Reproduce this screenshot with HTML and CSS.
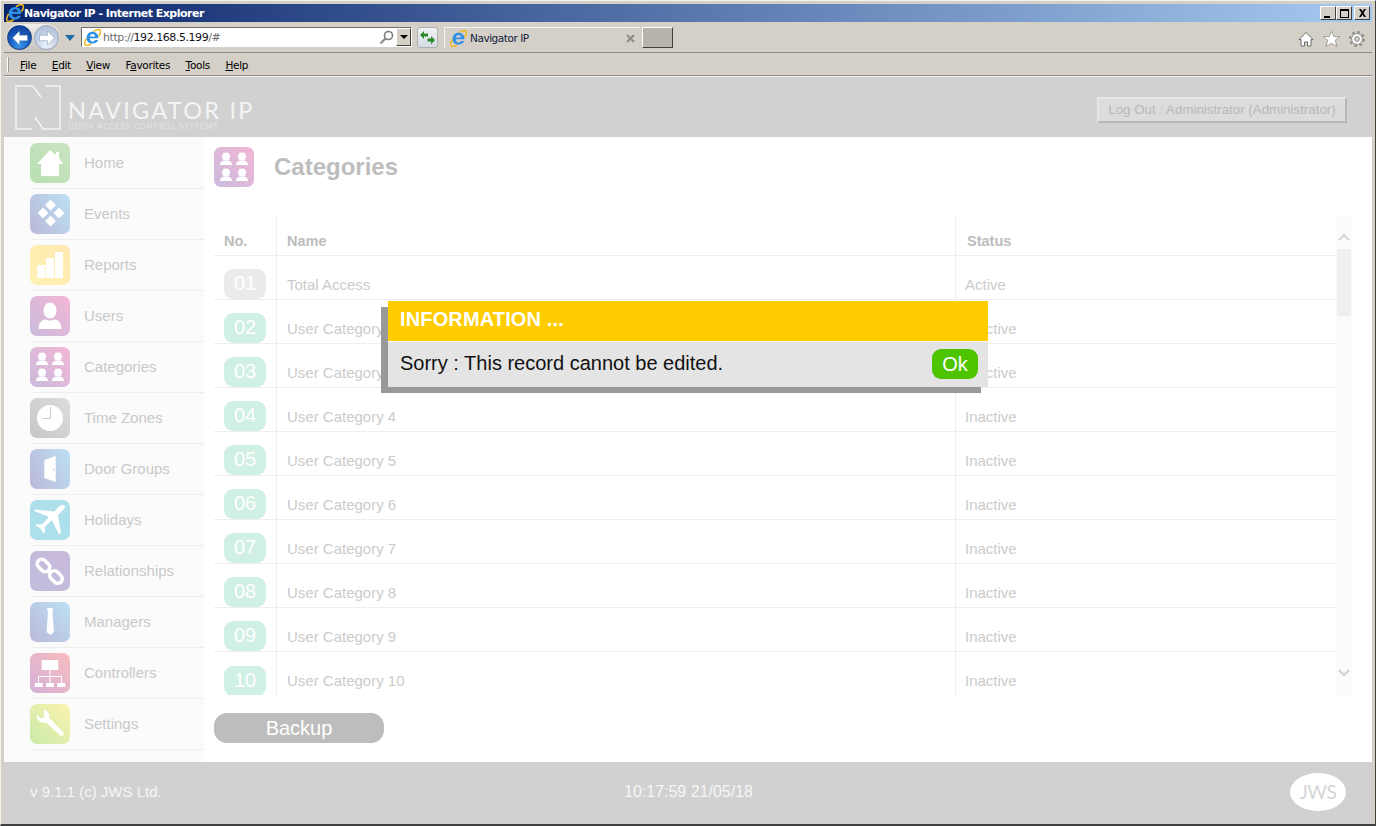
FILE: index.html
```html
<!DOCTYPE html>
<html lang="en">
<head>
<meta charset="utf-8">
<title>Navigator IP - Internet Explorer</title>
<link rel="stylesheet" href="styles.css">
</head>
<body>
<svg class="defs" width="0" height="0" aria-hidden="true">
  <defs>
    <symbol id="ie" viewBox="0 0 20 20">
      <path d="M11 3C14 1 18 0 19 1.500 20 3 18.500 6.500 17 8.500M2.800 11C1 14.500 0 17.500 1.500 18.800 3 20 6 19 8.500 17.500" fill="none" stroke="#f2b51c" stroke-width="1.700"/>
      <path d="M4.500 11H16.800C17.300 6 13.800 3.300 10 3.300 6 3.300 3 6.500 3 10.500 3 14.500 6 17.200 10 17.200 13.200 17.200 15.700 15.600 16.700 13H13C12.200 14.200 11.300 14.800 10 14.800 8 14.800 6.800 13 6.800 11ZM6.900 8.700C7.200 7 8.300 5.800 10 5.800 11.700 5.800 12.900 7 13.100 8.700Z" fill="#2e90e6" fill-rule="evenodd"/>
    </symbol>
    <symbol id="i-home" viewBox="0 0 40 40"><path d="M7 21 20 7l6 5V9h3v6l4 6h-4v12H11V21z" fill="#fff"/></symbol>
    <symbol id="i-events" viewBox="0 0 40 40"><path d="M20.500 5.500 26 11l-5.500 5.500L15 11zM13 13.500 18.500 19 13 24.500 7.500 19zM29 13.500 34.500 19 29 24.500 23.500 19zM20.500 21.500 26 27l-5.500 5.500L15 27z" fill="#fff"/></symbol>
    <symbol id="i-reports" viewBox="0 0 40 40"><path d="M7.300 20h8v13h-8zM16 13h8v20h-8zM25 7h8v26h-8z" fill="#fff"/></symbol>
    <symbol id="i-user" viewBox="0 0 40 40"><ellipse cx="20" cy="14.500" rx="6.500" ry="8" fill="#fff"/><path d="M8.500 33c0-6.500 3.500-9.500 7.500-9.500 2.500 1.500 5.500 1.500 8 0 4 0 7.500 3 7.500 9.500z" fill="#fff"/></symbol>
    <symbol id="i-cats" viewBox="0 0 40 40">
      <g fill="#fff">
        <circle cx="12" cy="9.500" r="4"/><path d="M6 18c0-3 2.500-4.500 4.500-4.500h3c2 0 4.500 1.500 4.500 4.500z"/>
        <circle cx="28" cy="9.500" r="4"/><path d="M22 18c0-3 2.500-4.500 4.500-4.500h3c2 0 4.500 1.500 4.500 4.500z"/>
        <circle cx="12" cy="25.500" r="4"/><path d="M6 34c0-3 2.500-4.500 4.500-4.500h3c2 0 4.500 1.500 4.500 4.500z"/>
        <circle cx="28" cy="25.500" r="4"/><path d="M22 34c0-3 2.500-4.500 4.500-4.500h3c2 0 4.500 1.500 4.500 4.500z"/>
      </g>
    </symbol>
    <symbol id="i-clock" viewBox="0 0 40 40"><circle cx="20" cy="20" r="13" fill="#fff"/><path d="M20.500 9v11.500H13" fill="none" stroke="#c8c8c8"/></symbol>
    <symbol id="i-door" viewBox="0 0 40 40"><path d="M14.300 11 25.700 7v26l-11.400-4z" fill="#fff"/><rect x="23" y="19.500" width="1" height="2" fill="#c4c9e2"/></symbol>
    <symbol id="i-plane" viewBox="0 0 40 40"><path d="M34.500 5.500C33 4 30 5.500 28 7.500L24 11.500 5 9.500 4 11l15 6-7 7.500-5-.5-1.500 1.500 5 3 3 5 1.500-1.500-.3-5L22 20l7 14.500 2-1.500-3-18 4.500-4.500c2-2 3.500-3.500 2-5z" fill="#fff"/></symbol>
    <symbol id="i-chain" viewBox="0 0 40 40"><g fill="none" stroke="#fff" stroke-width="3.600"><rect x="6.500" y="10" width="14" height="9" rx="4.500" transform="rotate(45 13.500 14.500)"/><rect x="19" y="21.500" width="14" height="9" rx="4.500" transform="rotate(45 26 26)"/></g></symbol>
    <symbol id="i-tie" viewBox="0 0 40 40"><path d="M17 6h6l-.5 5 1.500 19-3.500 3-4-3 1.500-19z" fill="#fff"/></symbol>
    <symbol id="i-net" viewBox="0 0 40 40"><path d="M11.700 7h16.600v10H11.700zM4.700 30h8v4h-8zM16 30h8v4h-8zM27.300 30h8v4h-8z" fill="#fff"/><path d="M20 17v13M8.500 30v-6.500h23V30" fill="none" stroke="#fff"/></symbol>
    <symbol id="i-wrench" viewBox="0 0 40 40"><path d="M6.500 10.500 10.500 14.500 14.500 13 13.500 6C17.500 6 20 9.500 19 13.500L33.500 28.500C34.500 30 33 32.500 30.500 31.500L16 18.500C11 20 6 16 6.500 10.500Z" fill="#fff"/></symbol>
    <symbol id="i-arrow" viewBox="0 0 24 24"><path d="M3 12l8.500-8.500v5.300H21v6.400h-9.500v5.300z" fill="#fff" stroke="#5a7fa8" stroke-width=".5" stroke-linejoin="round"/></symbol>
  </defs>
</svg>
<div class="window">
  <div class="titlebar">
    <svg class="title-ie"><use href="#ie"/></svg>
    <span class="title-text">Navigator IP - Internet Explorer</span>
    <div class="win-btns">
      <span class="win-btn"><span class="glyph-min"></span></span>
      <span class="win-btn"><span class="glyph-max"></span></span>
      <span class="win-btn win-close">
        <svg width="9" height="8" viewBox="0 0 9 8"><path d="M1 0h2l1.500 2.500L6 0h2L5.500 4 8 8H6L4.500 5.500 3 8H1l2.500-4z" fill="#000"/></svg>
      </span>
    </div>
  </div>

  <div class="toolbar">
    <div class="nav-pair">
      <span class="nav-btn nav-back"><svg width="20" height="20"><use href="#i-arrow"/></svg></span>
      <span class="nav-btn nav-fwd"><svg class="flip" width="20" height="20"><use href="#i-arrow"/></svg></span>
    </div>
    <span class="nav-drop"></span>
    <div class="address">
      <svg class="addr-ie"><use href="#ie"/></svg>
      <span class="url"><span class="url-dim">http://</span>192.168.5.199<span class="url-dim">/#</span></span>
      <svg class="search" width="15" height="15" viewBox="0 0 15 15"><circle cx="9.500" cy="5.500" r="4" fill="none" stroke="#7d7d7d" stroke-width="1.600"/><path d="M6.500 8.500 1.500 13.500" stroke="#8a8a8a" stroke-width="2.200"/></svg>
      <span class="addr-drop"><span class="tri"></span></span>
    </div>
    <span class="refresh">
      <svg width="15" height="15" viewBox="0 0 15 15"><path d="M0 5l4-4v2.500h4V6.500H4V9zM15 10l-4-4v2.500H7.500v3H11V14.500z" fill="#2a8a2a"/></svg>
    </span>
    <div class="tab">
      <svg class="tab-ie"><use href="#ie"/></svg>
      <span class="tab-text">Navigator IP</span>
      <svg class="tab-x" width="9" height="9" viewBox="0 0 9 9"><path d="M1 1l7 7M8 1 1 8" stroke="#8c8c8c" stroke-width="2"/></svg>
    </div>
    <span class="new-tab"></span>
    <div class="tool-icons">
      <svg width="16" height="16" viewBox="0 0 16 16"><path d="M8 1.500 15 8.500h-2V15h-3.500v-4h-3v4H3V8.500H1z" fill="#fff" stroke="#6d6d6d"/></svg>
      <svg width="17" height="16" viewBox="0 0 17 16"><path d="M8.500.5l2.400 5h5.600l-4.200 3.700 1.600 6.300-5.400-3.300-5.400 3.300 1.600-6.300L.5 5.500h5.600z" fill="#fff" stroke="#8d8d8d" stroke-width=".8"/></svg>
      <svg width="16" height="16" viewBox="0 0 16 16"><circle cx="8" cy="8" r="6.900" fill="none" stroke="#8a8a8a" stroke-width="2" stroke-dasharray="2.700 2.720"/><circle cx="8" cy="8" r="5.400" fill="#fff" stroke="#8a8a8a"/><circle cx="8" cy="8" r="2.400" fill="#d4d0c8" stroke="#8a8a8a"/></svg>
    </div>
  </div>

  <div class="menubar">
    <span class="grip"></span>
    <span class="menu-item"><u>F</u>ile</span>
    <span class="menu-item"><u>E</u>dit</span>
    <span class="menu-item"><u>V</u>iew</span>
    <span class="menu-item">F<u>a</u>vorites</span>
    <span class="menu-item"><u>T</u>ools</span>
    <span class="menu-item"><u>H</u>elp</span>
  </div>

  <header class="app-header">
    <div class="brand">
      <svg class="brand-mark" width="46" height="45" viewBox="0 0 46 45"><path d="M26 12 18 1H1V44H17M30 1H45V44H28L20 32" fill="none" stroke="#f4f4f4" stroke-width="1.500"/></svg>
      <div class="brand-words">
        <div class="brand-name">NAVIGATOR IP</div>
        <div class="brand-sub">DOOR ACCESS CONTROL SYSTEMS</div>
      </div>
    </div>
    <button class="logout" type="button">Log Out : Administrator (Administrator)</button>
  </header>

  <main class="app-main">
    <nav class="sidebar">
      <a class="side-item"><span class="tile g-green"><svg><use href="#i-home"/></svg></span><span class="side-label">Home</span></a>
      <a class="side-item"><span class="tile g-blue"><svg><use href="#i-events"/></svg></span><span class="side-label">Events</span></a>
      <a class="side-item"><span class="tile g-yellow"><svg><use href="#i-reports"/></svg></span><span class="side-label">Reports</span></a>
      <a class="side-item"><span class="tile g-pink"><svg><use href="#i-user"/></svg></span><span class="side-label">Users</span></a>
      <a class="side-item"><span class="tile g-pink"><svg><use href="#i-cats"/></svg></span><span class="side-label">Categories</span></a>
      <a class="side-item"><span class="tile g-grey"><svg><use href="#i-clock"/></svg></span><span class="side-label">Time Zones</span></a>
      <a class="side-item"><span class="tile g-blue"><svg><use href="#i-door"/></svg></span><span class="side-label">Door Groups</span></a>
      <a class="side-item"><span class="tile g-cyan"><svg><use href="#i-plane"/></svg></span><span class="side-label">Holidays</span></a>
      <a class="side-item"><span class="tile g-purple"><svg><use href="#i-chain"/></svg></span><span class="side-label">Relationships</span></a>
      <a class="side-item"><span class="tile g-blue2"><svg><use href="#i-tie"/></svg></span><span class="side-label">Managers</span></a>
      <a class="side-item"><span class="tile g-red"><svg><use href="#i-net"/></svg></span><span class="side-label">Controllers</span></a>
      <a class="side-item"><span class="tile g-lime"><svg><use href="#i-wrench"/></svg></span><span class="side-label">Settings</span></a>
    </nav>

    <section class="content">
      <div class="page-head">
        <span class="tile g-pink"><svg><use href="#i-cats"/></svg></span>
        <h1 class="page-title">Categories</h1>
      </div>
      <div class="table-wrap">
        <div class="table-clip">
          <table class="grid">
            <thead>
              <tr><th class="c-no">No.</th><th class="c-name">Name</th><th class="c-status">Status</th></tr>
            </thead>
            <tbody>
              <tr><td class="c-no"><span class="badge badge-on">01</span></td><td class="c-name">Total Access</td><td class="c-status">Active</td></tr>
              <tr><td class="c-no"><span class="badge">02</span></td><td class="c-name">User Category 2</td><td class="c-status">Inactive</td></tr>
              <tr><td class="c-no"><span class="badge">03</span></td><td class="c-name">User Category 3</td><td class="c-status">Inactive</td></tr>
              <tr><td class="c-no"><span class="badge">04</span></td><td class="c-name">User Category 4</td><td class="c-status">Inactive</td></tr>
              <tr><td class="c-no"><span class="badge">05</span></td><td class="c-name">User Category 5</td><td class="c-status">Inactive</td></tr>
              <tr><td class="c-no"><span class="badge">06</span></td><td class="c-name">User Category 6</td><td class="c-status">Inactive</td></tr>
              <tr><td class="c-no"><span class="badge">07</span></td><td class="c-name">User Category 7</td><td class="c-status">Inactive</td></tr>
              <tr><td class="c-no"><span class="badge">08</span></td><td class="c-name">User Category 8</td><td class="c-status">Inactive</td></tr>
              <tr><td class="c-no"><span class="badge">09</span></td><td class="c-name">User Category 9</td><td class="c-status">Inactive</td></tr>
              <tr><td class="c-no"><span class="badge">10</span></td><td class="c-name">User Category 10</td><td class="c-status">Inactive</td></tr>
            </tbody>
          </table>
        </div>
        <div class="scrollbar">
          <svg class="sb-arrow" width="12" height="8" viewBox="0 0 12 8"><path d="M1 7l5-5 5 5" fill="none" stroke="#d2d2d2" stroke-width="2"/></svg>
          <span class="sb-thumb"></span>
          <svg class="sb-arrow sb-down" width="12" height="8" viewBox="0 0 12 8"><path d="M1 1l5 5 5-5" fill="none" stroke="#d2d2d2" stroke-width="2"/></svg>
        </div>
      </div>
      <button class="backup" type="button">Backup</button>
    </section>
  </main>

  <footer class="app-footer">
    <span class="version">v 9.1.1 (c) JWS Ltd.</span>
    <span class="clock">10:17:59 21/05/18</span>
    <span class="jws">JWS</span>
  </footer>

  <div class="modal" role="dialog">
    <div class="modal-head">INFORMATION ...</div>
    <div class="modal-body">
      <span>Sorry : This record cannot be edited.</span>
      <button class="ok" type="button">Ok</button>
    </div>
  </div>
</div>
</body>
</html>
```

FILE: styles.css
```css
* { box-sizing: border-box; }
html, body { margin: 0; padding: 0; }
body { width: 1376px; height: 826px; overflow: hidden; background: #d4d0c8; font-family: "Liberation Sans", Arial, sans-serif; }
.defs { position: absolute; }

.window {
  position: relative;
  width: 1376px;
  height: 826px;
  display: flex;
  flex-direction: column;
  border: 4px solid #d4d0c8;
  border-bottom-width: 2px;
  box-shadow: inset 1px 1px 0 #fff, inset -1px -1px 0 #404040;
}
.window::after {
  content: "";
  position: absolute;
  inset: -4px -4px -2px -4px;
  border-right: 1px solid #404040;
  border-bottom: 2px solid #404040;
  border-left: 1px solid #f4f2ee;
  border-top: 1px solid #f4f2ee;
  pointer-events: none;
}

/* title bar */
.titlebar {
  height: 18px;
  flex: none;
  display: flex;
  align-items: center;
  padding-left: 2px;
  background: linear-gradient(90deg, #0a246a, #a6caf0);
}
.title-ie { width: 18px; height: 18px; flex: none; }
.title-text { font: bold 11px "DejaVu Sans", sans-serif; color: #fff; letter-spacing: -0.5px; white-space: nowrap; }
.win-btns { margin-left: auto; display: flex; padding-right: 2px; }
.win-btn {
  width: 16px;
  height: 14px;
  background: #d4d0c8;
  border: 1px solid;
  border-color: #fff #404040 #404040 #fff;
  display: flex;
  align-items: center;
  justify-content: center;
  position: relative;
}
.win-close { margin-left: 2px; }
.glyph-min { width: 6px; height: 2px; background: #000; margin-top: 7px; margin-left: -2px; }
.glyph-max { width: 9px; height: 9px; border: 1px solid #000; border-top-width: 2px; }

/* toolbar */
.toolbar {
  height: 31px;
  flex: none;
  display: flex;
  align-items: flex-start;
  background: #d4d0c8;
  border-bottom: 1px solid #8a8a86;
  box-shadow: 0 1px 0 #f4f2ee;
  position: relative;
}
.nav-pair {
  display: flex;
  gap: 2px;
  margin: 2px 0 0 2px;
  padding: 1px;
  border-radius: 14px;
  background: linear-gradient(#efeeea, #c5c3bd);
  height: 27px;
}
.nav-btn { width: 25px; height: 25px; border-radius: 50%; display: flex; align-items: center; justify-content: center; }
.nav-back { background: radial-gradient(circle at 50% 85%, #3a9af0 0, #1a5dc0 45%, #0f3a8c 100%); border: 1px solid #173f7e; }
.nav-fwd { background: radial-gradient(circle at 50% 85%, #eef3fa 0, #c4d2e6 50%, #aabbd3 100%); border: 1px solid #9aa8bc; }
.flip { transform: scaleX(-1); }
.nav-drop {
  width: 0;
  height: 0;
  margin: 13px 0 0 5px;
  border-left: 5px solid transparent;
  border-right: 5px solid transparent;
  border-top: 6px solid #1e6ea8;
}
.address {
  margin: 5px 0 0 6px;
  width: 331px;
  height: 20px;
  display: flex;
  align-items: center;
  background: #fff;
  border: 1px solid;
  border-color: #6e6e6a #fff #fff #6e6e6a;
}
.addr-ie { width: 17px; height: 17px; flex: none; margin-left: 2px; }
.url { margin-left: 2px; font: 11px "DejaVu Sans", sans-serif; letter-spacing: -0.45px; color: #111; white-space: nowrap; }
.url-dim { color: #6d6d6d; }
.search { margin-left: auto; flex: none; }
.addr-drop {
  width: 15px;
  height: 18px;
  margin-left: 2px;
  background: #d4d0c8;
  border: 1px solid;
  border-color: #fff #404040 #404040 #fff;
  display: flex;
  align-items: center;
  justify-content: center;
  flex: none;
}
.tri { width: 0; height: 0; border-left: 4px solid transparent; border-right: 4px solid transparent; border-top: 4px solid #000; }
.refresh {
  margin: 5px 0 0 5px;
  width: 21px;
  height: 21px;
  border-radius: 3px;
  background: linear-gradient(#f0f2f6, #d6dbe4);
  border: 1px solid #aeb0b2;
  display: flex;
  align-items: center;
  justify-content: center;
  flex: none;
}
.tab {
  margin: 5px 0 0 6px;
  width: 196px;
  height: 21px;
  display: flex;
  align-items: center;
  border-top: 1px solid #f4f2ee;
  border-left: 1px solid #f4f2ee;
  background: #d4d0c8;
  flex: none;
}
.tab-ie { width: 17px; height: 17px; flex: none; margin-left: 5px; }
.tab-text { margin-left: 3px; font: 10.5px "DejaVu Sans", sans-serif; letter-spacing: -0.45px; color: #10203c; white-space: nowrap; }
.tab-x { margin-left: auto; margin-right: 5px; }
.new-tab {
  margin: 5px 0 0 2px;
  width: 31px;
  height: 21px;
  background: #b8b4ac;
  border: 1px solid;
  border-color: #fff #404040 #404040 #fff;
  flex: none;
}
.tool-icons { margin: 9px 7px 0 auto; display: flex; gap: 9px; align-items: center; }

/* menu */
.menubar {
  height: 23px;
  flex: none;
  display: flex;
  align-items: center;
  background: #d4d0c8;
  border-bottom: 1px solid #8a8a86;
  padding-top: 1px;
  box-shadow: 0 1px 0 #f4f2ee;
  position: relative;
}
.grip { width: 2px; height: 15px; margin: 0 11px 0 3px; background: #a09c94; border-left: 1px solid #fff; }
.menu-item { font: 10.5px "DejaVu Sans", sans-serif; letter-spacing: -0.3px; color: #000; margin-right: 15.4px; white-space: nowrap; }

/* app header */
.app-header {
  height: 60px;
  flex: none;
  margin-top: 1px;
  display: flex;
  align-items: flex-start;
  background: #d1d1d1;
}
.brand { display: flex; margin: 8px 0 0 11px; }
.brand-mark { flex: none; }
.brand-words { margin-left: 7px; padding-top: 13px; color: #f4f4f4; }
.brand-name { font: 400 23.5px/24px Lato, sans-serif; letter-spacing: 2.25px; white-space: nowrap; }
.brand-sub { font: 400 7.5px/9px Lato, sans-serif; letter-spacing: 1.02px; color: #e3e3e3; white-space: nowrap; }
.logout {
  margin: 20px 25px 0 auto;
  width: 250px;
  height: 26px;
  padding: 0 0 2px;
  font: 13.33px "Liberation Sans", Arial, sans-serif;
  color: #b8b8b8;
  background: #dcdcdc;
  border: 2px solid;
  border-color: #e6e6e6 #b6b6b6 #b6b6b6 #e6e6e6;
}

/* main */
.app-main { flex: none; height: 625px; display: flex; background: #fff; }
.sidebar { width: 200px; flex: none; background: #fbfbfb; padding: 1px 0 0 26px; }
.side-item {
  display: flex;
  align-items: center;
  gap: 14px;
  height: 51px;
  border-bottom: 1px solid #eeeeee;
  font-size: 15px;
  color: #c9c9c9;
}
.side-label { margin-bottom: 2px; }
.tile {
  width: 40px;
  height: 40px;
  flex: none;
  border-radius: 7px;
  display: block;
}
.tile svg { width: 40px; height: 40px; display: block; }
.g-green { background: linear-gradient(45deg, #b7deb1, #cbe4c2); }
.g-blue { background: linear-gradient(60deg, #bbb8d8, #bce0f5); }
.g-blue2 { background: linear-gradient(225deg, #bce0f5, #bbb8d8); }
.g-yellow { background: linear-gradient(45deg, #fff1b4, #ffe9b0); }
.g-pink { background: linear-gradient(45deg, #c9bbdc, #f4b6d6); }
.g-grey { background: linear-gradient(45deg, #c6c6c6, #dddddd); }
.g-cyan { background: #aee0ec; }
.g-purple { background: linear-gradient(45deg, #c0bedd, #c9b8da); }
.g-red { background: linear-gradient(45deg, #d6b0d8, #f8bdbf); }
.g-lime { background: linear-gradient(45deg, #c9e8a9, #fdf4b0); }

.content { flex: 1; min-width: 0; padding: 10px 20px 0 10px; }
.page-head { display: flex; align-items: center; gap: 20px; height: 40px; }
.page-title { margin: 0 0 1px; font: bold 24px "Liberation Sans", Arial, sans-serif; color: #bdbdbd; }

.table-wrap { display: flex; height: 480px; margin-top: 28px; }
.table-clip { flex: 1; min-width: 0; overflow: hidden; }
.grid { width: 1122px; table-layout: fixed; border-collapse: separate; border-spacing: 0; font-size: 15px; color: #cbcbcb; }
.grid th, .grid td { padding: 0; border-bottom: 1px solid #eeeeee; text-align: left; font-weight: normal; }
.grid th { height: 41px; font-weight: bold; font-size: 14.5px; color: #bcbcbc; padding-top: 12px; }
.grid td { height: 44px; padding-top: 13px; vertical-align: middle; }
.c-no { width: 63px; border-right: 1px solid #eeeeee; padding-left: 10px !important; }
.c-name { width: 679px; border-right: 1px solid #eeeeee; padding-left: 10px !important; }
.c-status { padding-left: 9px !important; }
th.c-status { padding-left: 11px !important; }
.badge {
  display: block;
  width: 42px;
  height: 30px;
  border-radius: 9px;
  background: #d0f0e4;
  color: #fff;
  font-size: 20px;
  line-height: 28px;
  text-align: center;
}
.badge-on { background: #ebebeb; }
.grid tbody tr:last-child td { border-bottom: 0; }

.scrollbar { width: 16px; flex: none; background: #fbfbfb; position: relative; padding: 0 1px; display: flex; flex-direction: column; align-items: center; }
.sb-arrow { margin-top: 18px; flex: none; }
.sb-thumb { width: 14px; height: 67px; margin-top: 8px; background: #efefef; flex: none; }
.sb-down { margin-top: auto; margin-bottom: 18px; }

.backup {
  display: block;
  width: 170px;
  height: 30px;
  margin-top: 18px;
  padding: 0;
  border: 0;
  border-radius: 13px;
  background: #bdbdbd;
  color: #fff;
  font: 20px "Liberation Sans", Arial, sans-serif;
}

/* footer */
.app-footer {
  flex: none;
  height: 62px;
  display: grid;
  grid-template-columns: 1fr auto 1fr;
  align-items: center;
  background: #d1d1d1;
  padding: 0 26px 2px;
  color: #f6f6f6;
}
.version { font-size: 15px; margin-bottom: 1px; }
.clock { font-size: 16px; margin: 0 0 1px 1px; }
.jws {
  justify-self: end;
  width: 56px;
  height: 38px;
  border-radius: 50%;
  background: #fff;
  color: #d6d6d6;
  font: 400 19px/38px Lato, sans-serif;
  letter-spacing: -.5px;
  text-align: center;
}

/* dialog */
.modal {
  position: absolute;
  left: 384px;
  top: 297px;
  width: 600px;
  height: 86px;
  box-shadow: -7px 6px 0 #999999;
}
.modal-head {
  height: 40px;
  padding-left: 12px;
  background: #ffcc00;
  color: #fff;
  font: bold 20px/37px "Liberation Sans", Arial, sans-serif;
  letter-spacing: .14px;
}
.modal-body {
  height: 45px;
  margin-top: 1px;
  box-shadow: 0 -1px 0 #fff;
  display: flex;
  align-items: center;
  justify-content: space-between;
  padding: 0 10px 0 12px;
  background: #e4e4e4;
  color: #111;
  font-size: 20px;
}
.modal-body > span { margin-bottom: 3px; }
.ok {
  width: 46px;
  height: 30px;
  margin-bottom: 1px;
  padding: 0;
  border: 0;
  border-radius: 9px;
  background: #4ec400;
  color: #fff;
  font: 20px "Liberation Sans", Arial, sans-serif;
}
```
